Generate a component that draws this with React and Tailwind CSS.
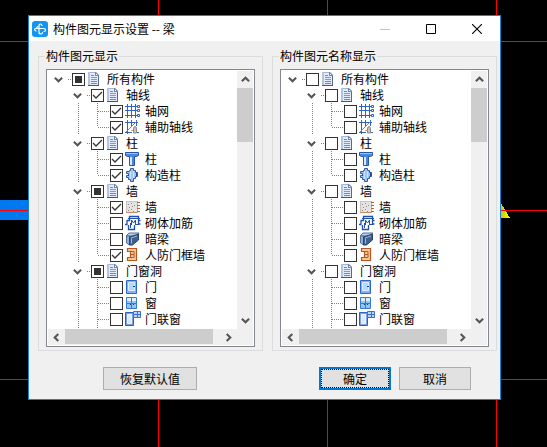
import { useEffect, useRef } from "react";

const ROWS = [
  { text: "所有构件", level: 0, icon: "doc", state: "mixed" },
  { text: "轴线", level: 1, icon: "doc", state: "on" },
  { text: "轴网", level: 2, icon: "grid", state: "on" },
  { text: "辅助轴线", level: 2, icon: "axis", state: "on", last: true },
  { text: "柱", level: 1, icon: "doc", state: "on" },
  { text: "柱", level: 2, icon: "column", state: "on" },
  { text: "构造柱", level: 2, icon: "puzzle", state: "on", last: true },
  { text: "墙", level: 1, icon: "doc", state: "mixed" },
  { text: "墙", level: 2, icon: "wall", state: "on" },
  { text: "砌体加筋", level: 2, icon: "rebar", state: "off" },
  { text: "暗梁", level: 2, icon: "beam", state: "off" },
  { text: "人防门框墙", level: 2, icon: "frame", state: "on", last: true },
  { text: "门窗洞", level: 1, icon: "doc", state: "mixed" },
  { text: "门", level: 2, icon: "door", state: "off" },
  { text: "窗", level: 2, icon: "window", state: "off" },
  { text: "门联窗", level: 2, icon: "doorwin", state: "off" },
];

const GLYPHS = {
  doc: (
    <>
      <path d="M1 1h8l3 3v11H1z" fill="#e3ebfa" />
      <path d="M1 1h2v14H1z" fill="#b3c3e2" />
      <path d="M3 1h6v1H3z" fill="#a3b4d6" />
      <path d="M11 4h1v11h-1z" fill="#54698f" />
      <path d="M1 14h11v1H1z" fill="#43587f" />
      <path d="M8 1h1l3 3v1H8z" fill="#7388ae" />
      <path d="M9 3h1v1H9z" fill="#fff" />
      <path d="M4 4h3v1H4zM4 10h6v1H4zM4 12h6v1H4z" fill="#7189b8" />
      <path d="M4 6h6v1H4zM4 8h6v1H4z" fill="#f4764c" />
    </>
  ),
  grid: (
    <g fill="none" stroke="#2e63c4">
      <path d="M2.500 1v14M6.500 1v14M10.500 1v14M0 3.500h12M0 7.500h12M0 12.500h12" />
      <path d="M12.500 2.500h2v2h-2zM12.500 6.500h2v2h-2zM12.500 11.500h2v2h-2z" />
    </g>
  ),
  axis: (
    <g fill="none">
      <path d="M2.500 1v14M6.500 1v7M11.500 1v6M0 3.500h13M0 13.500h7" stroke="#2e63c4" />
      <path d="M1 13 12 2" stroke="#3f8fe8" />
      <path d="M8.500 14V10q0-2.500 1.500-2.500t1.500 2.500v4z" fill="#c4c4ca" stroke="#8a8a90" />
      <path d="M6 11.500h2" stroke="#e0a468" />
      <path d="M12 13.500h2" stroke="#2e63c4" />
    </g>
  ),
  column: (
    <>
      <path d="M.5 1.500h13v3l-2 1H9.500v9h-5v-9H2.500l-2-1z" fill="#4b86de" stroke="#2455ae" />
      <path d="M1 2.500h12" stroke="#9cc4f8" />
      <path d="M6 6v8" stroke="#d8ecff" strokeWidth="2" />
    </>
  ),
  puzzle: (
    <>
      <path
        d="M4.500 3.500h1v-2h3v2h2v2h2v4h-2v2h-2v3h-3v-2h-2v-2h-2v-2h2v-2h-2v-2h3z"
        fill="#9fc5f3"
        stroke="#2c5aa8"
      />
      <path d="M5.500 4v8M8.500 4v7" stroke="#cfe5fd" />
      <path d="M10 4.500h1M11.500 5v5M3 8.500h1" stroke="#23498c" />
    </>
  ),
  wall: (
    <>
      <path d="M1 2h11v12H1z" fill="#e6e4e3" />
      <path d="M1 2h11v1H1zM1 2h1v12H1z" fill="#c8c2be" />
      <path d="M3 5h1v1H3zM6 4h1v1H6zM9 6h1v1H9zM4 8h1v1H4zM7 7h1v1H7zM6 10h1v1H6zM3 11h1v1H3zM8 12h1v1H8z" fill="#8d8683" />
      <path d="M1 13h12v1H1z" fill="#d08a60" />
      <path d="M12 2h1v12h-1z" fill="#eda271" />
      <path d="M12 3h3v1h-3zM12 6h3v1h-3zM12 9h3v1h-3zM12 12h3v1h-3z" fill="#c7621f" />
    </>
  ),
  rebar: (
    <g fill="none" stroke="#1f4fae">
      <path d="M1.500 5.500h3v-4h9v4h2M0 9.500h2v-4M13.500 5v4h2M3.500 10v4.500h6V10" strokeWidth="1.3" />
      <path d="M3 3.500h12M6.500 10V5l2 3 2-3v5M10 9.500h4M5.500 8v5" />
    </g>
  ),
  beam: (
    <>
      <path d="M1 5 4 2h10l-3 3z" fill="#b5d0ef" stroke="#54719b" />
      <path d="M1.500 5h3v9l-3-2z" fill="#8fb2dd" stroke="#54719b" />
      <path d="M4.500 6 13.500 3v6l-6 5h-3z" fill="#3f608f" stroke="#2a4468" />
      <path d="M6.500 7.500v5M6 7l6-2" stroke="#98b9e2" />
    </>
  ),
  frame: (
    <>
      <path
        d="M2.500 1.500h9v12h-9v-3h3v-6h-3z"
        fill="#f6c89d"
        stroke="#b8581e"
        strokeWidth="1.2"
      />
      <path d="M5 4.500h4v6H5M9 7.500H6" fill="none" stroke="#b8581e" />
    </>
  ),
  door: (
    <>
      <path d="M1.500 1.500h10v13h-10z" fill="#7fb2fa" stroke="#2a66ce" />
      <path d="M3.500 3.500h6v8h-6z" fill="#b4d7ff" stroke="#dcefff" />
      <path d="M8 7h2v1H8z" fill="#163f88" />
    </>
  ),
  window: (
    <>
      <path d="M1.500 2.500h10v11h-10z" fill="#8fc6fa" stroke="#3a78d8" />
      <path d="M2 3h9v3H2z" fill="#dcf1ff" />
      <path d="M6.500 2v12M1 8.500h11" stroke="#3a78d8" />
      <path d="M5 9h1v1H5zM8 9h1v1H8z" fill="#123b86" />
    </>
  ),
  doorwin: (
    <>
      <path d="M.5 1.500h8v13h-8z" fill="#7c9fea" stroke="#2f5fc0" />
      <path d="M2.500 3.500h4v9h-4z" fill="#dce9ff" stroke="#eef6ff" />
      <path d="M8.500.5h7v6h-7z" fill="#bcd6fb" stroke="#3c6fd0" />
      <path d="M12.500 1v6M9 3.500h7" stroke="#3c6fd0" />
    </>
  ),
};

const CHEVRON = {
  down: "M1 3 5 7 9 3",
  up: "M1 7 5 3 9 7",
  left: "M7 1 3 5 7 9",
  right: "M3 1 7 5 3 9",
};

function Chevron({ dir }) {
  return (
    <svg className="size-[9px]" viewBox="0 0 10 10" aria-hidden="true">
      <path d={CHEVRON[dir]} fill="none" stroke="#555" strokeWidth="2.3" />
    </svg>
  );
}

function Dots({ className = "" }) {
  return (
    <span
      className={`w-px shrink-0 bg-[repeating-linear-gradient(to_bottom,#808080_0_1px,transparent_1px_2px)] ${className}`}
    />
  );
}

function HDots({ className }) {
  return (
    <span
      className={`h-px bg-[repeating-linear-gradient(to_right,#808080_0_1px,transparent_1px_2px)] ${className}`}
    />
  );
}

function Check({ id, state }) {
  const ref = useRef(null);
  useEffect(() => {
    ref.current.indeterminate = state === "mixed";
  }, [state]);
  return (
    <span className="grid size-[13px] shrink-0">
      <input
        ref={ref}
        id={id}
        type="checkbox"
        defaultChecked={state === "on"}
        className="peer col-start-1 row-start-1 size-[13px] appearance-none border border-[#333] bg-white"
      />
      <svg
        className="pointer-events-none col-start-1 row-start-1 hidden size-[13px] peer-checked:block"
        viewBox="0 0 13 13"
        aria-hidden="true"
      >
        <path d="M2 6 5 9l6-6" fill="none" stroke="#333" strokeWidth="1.3" />
      </svg>
      <span className="pointer-events-none col-start-1 row-start-1 hidden size-[7px] place-self-center bg-[#333] peer-indeterminate:block" />
    </span>
  );
}

function Row({ row, id, state }) {
  const parent = row.level < 2;
  return (
    <li className="flex h-4 items-center pl-px">
      {row.level > 0 && <span className="w-[19px] shrink-0" />}
      {parent ? (
        <>
          <button
            type="button"
            aria-label={`折叠${row.text}`}
            className="flex h-4 w-[19px] shrink-0 items-center justify-center"
          >
            <Chevron dir="down" />
          </button>
          <HDots className="mr-px w-[3px]" />
        </>
      ) : (
        <>
          <span className="flex h-4 w-[19px] shrink-0 pl-[10px]">
            <Dots className="h-4" />
          </span>
          <span className="flex h-4 w-[23px] shrink-0 pl-[10px]">
            <Dots className={row.last ? "h-2" : "h-4"} />
            <HDots className="mt-2 w-[11px]" />
          </span>
        </>
      )}
      <Check id={id} state={state} />
      <label htmlFor={id} className="ml-[2px] flex h-4 items-center gap-1 whitespace-nowrap leading-4">
        <svg className="size-4 shrink-0" viewBox="0 0 16 16" aria-hidden="true">
          {GLYPHS[row.icon]}
        </svg>
        {row.text}
      </label>
    </li>
  );
}

function Panel({ title, name, unchecked }) {
  return (
    <fieldset className="min-w-0 flex-1 border border-[#dcdcdc] px-[7px] pt-[5px] pb-[3px]">
      <legend className="-ml-px px-px leading-4">{title}</legend>
      <div className="border border-[#828790] bg-white p-px">
        <div className="flex">
          <ul className="min-w-0 flex-1 overflow-hidden">
            {ROWS.map((row, i) => (
              <Row key={i} row={row} id={`${name}-${i}`} state={unchecked ? "off" : row.state} />
            ))}
            <li className="flex h-[2px] gap-[18px] pl-[30px]" aria-hidden="true">
              <Dots />
              <Dots />
            </li>
          </ul>
          <div className="flex w-4 shrink-0 flex-col bg-[#f0f0f0]">
            <button type="button" aria-label="向上滚动" className="flex h-[17px] items-center justify-center">
              <Chevron dir="up" />
            </button>
            <div className="h-[54px] bg-[#cdcdcd]" />
            <button
              type="button"
              aria-label="向下滚动"
              className="mt-auto flex h-[17px] items-center justify-center"
            >
              <Chevron dir="down" />
            </button>
          </div>
        </div>
        <div className="flex h-4 bg-[#f0f0f0] pr-4">
          <button type="button" aria-label="向左滚动" className="flex w-[17px] items-center justify-center">
            <Chevron dir="left" />
          </button>
          <div className="mb-px mr-[7px] flex-1 bg-[#cdcdcd]" />
          <button type="button" aria-label="向右滚动" className="flex w-[17px] items-center justify-center">
            <Chevron dir="right" />
          </button>
        </div>
      </div>
    </fieldset>
  );
}

function Drawing() {
  return (
    <svg className="absolute inset-0 h-full w-full" aria-hidden="true" shapeRendering="crispEdges">
      <defs>
        <linearGradient id="arrow" x1="0" x2="1">
          <stop offset="0" stopColor="#c8c800" />
          <stop offset="1" stopColor="#ffff00" />
        </linearGradient>
      </defs>
      <rect y="200" width="40" height="20" fill="#0078f0" />
      <path d="M501 203 510 218H501Z" fill="url(#arrow)" />
      <g fill="#f00">
        <rect x="158" width="1" height="100%" />
        <rect x="327" width="1" height="100%" />
        <rect x="496" width="1" height="100%" />
        <rect y="41" width="100%" height="1" />
        <rect y="210" width="100%" height="1" />
        <rect y="379" width="100%" height="1" />
      </g>
    </svg>
  );
}

export default function App() {
  return (
    <div className="relative min-h-screen bg-black pt-[15px] pr-[46px] pl-7 font-['Noto_Sans_CJK_SC',sans-serif] text-xs text-black">
      <Drawing />
      <section role="dialog" aria-labelledby="title" className="relative border border-[#1883d7] bg-[#f0f0f0]">
        <header className="flex h-[25px] items-center bg-white pl-[3px]">
          <svg className="size-4 shrink-0" viewBox="0 0 16 16" aria-hidden="true">
            <rect width="16" height="16" rx="3" fill="#1296f0" />
            <g fill="none" stroke="#fff" strokeWidth="1.2" strokeLinecap="round">
              <path d="M10 4.500Q9.500 3 8.300 3T7 4.500V11q0 2 2 2 1.500 0 1.500-1.500" />
              <path d="M4 10Q2.500 9.500 2.500 8.500T4 7.500h7.500q2 0 2 1.500t-1.500 1.500" />
              <path d="M4.500 7.500Q4.500 6 6 5.500" />
            </g>
          </svg>
          <h1 id="title" className="ml-[5px] flex-1 leading-4">
            构件图元显示设置 -- 梁
          </h1>
          <button type="button" aria-label="最小化" disabled className="flex h-full w-[46px] items-center justify-center">
            <svg className="size-[10px]" viewBox="0 0 10 10" aria-hidden="true">
              <path d="M0 5.500h10" stroke="#c4c4c4" />
            </svg>
          </button>
          <button type="button" aria-label="最大化" className="flex h-full w-[46px] items-center justify-center">
            <svg className="size-[10px]" viewBox="0 0 10 10" aria-hidden="true">
              <path d="M.5.5h9v9h-9z" fill="none" stroke="#000" />
            </svg>
          </button>
          <button type="button" aria-label="关闭" className="flex h-full w-[46px] items-center justify-center">
            <svg className="size-[10px]" viewBox="0 0 10 10" aria-hidden="true">
              <path d="M0 0 10 10M10 0 0 10" stroke="#000" strokeWidth="1.1" />
            </svg>
          </button>
        </header>
        <div className="flex gap-[9px] pt-[7px] pr-[3px] pl-[9px]">
          <Panel title="构件图元显示" name="element" />
          <Panel title="构件图元名称显示" name="label" unchecked />
        </div>
        <footer className="flex gap-2 pt-4 pr-[29px] pb-[9px] pl-[74px]">
          <button type="button" className="mr-auto h-[23px] w-[94px] border border-[#adadad] bg-[#e1e1e1]">
            恢复默认值
          </button>
          <button type="button" className="h-[23px] w-[72px] border-2 border-[#0078d7] bg-[#e1e1e1]">
            <span className="flex h-full items-center justify-center border border-dotted border-black">确定</span>
          </button>
          <button type="button" className="h-[23px] w-[72px] border border-[#adadad] bg-[#e1e1e1]">
            取消
          </button>
        </footer>
      </section>
    </div>
  );
}
